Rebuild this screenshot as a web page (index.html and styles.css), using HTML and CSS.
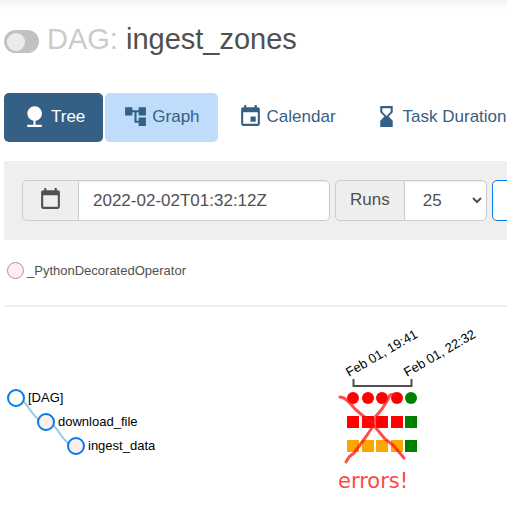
FILE: index.html
```html
<!DOCTYPE html>
<html lang="en">
<head>
<meta charset="utf-8">
<title>ingest_zones - Tree</title>
<meta name="viewport" content="width=device-width, initial-scale=1">
<link rel="stylesheet" href="styles.css">
</head>
<body>
<header class="page-header">
  <label class="toggle"><input type="checkbox" class="toggle-input" aria-label="Pause or unpause DAG"><span class="toggle-track"></span></label>
  <h1 class="title"><span class="title-kind">DAG:</span> ingest_zones</h1>
</header>

<nav class="tabs">
  <a class="tab tab-active" href="#tree">
    <svg class="icon" viewBox="0 0 24 24" aria-hidden="true"><path d="M13 16.12c3.47-.41 6.17-3.36 6.17-6.95 0-3.87-3.13-7-7-7s-7 3.13-7 7c0 3.47 2.52 6.34 5.83 6.89V20H5v2h14v-2h-6v-3.88z"/></svg>Tree</a>
  <a class="tab tab-hover" href="#graph">
    <svg class="icon" viewBox="0 0 24 24" aria-hidden="true"><path d="M22 11V3h-7v3H9V3H2v8h7V8h2v10h4v3h7v-8h-7v3h-2V8h2v3z"/></svg>Graph</a>
  <a class="tab" href="#calendar">
    <svg class="icon" viewBox="0 0 24 24" aria-hidden="true"><path d="M17 12h-5v5h5v-5zM16 1v2H8V1H6v2H5c-1.11 0-1.99.9-1.99 2L3 19c0 1.1.89 2 2 2h14c1.1 0 2-.9 2-2V5c0-1.1-.9-2-2-2h-1V1h-2zm3 18H5V8h14v11z"/></svg>Calendar</a>
  <a class="tab" href="#duration">
    <svg class="icon" viewBox="0 0 24 24" aria-hidden="true"><path d="M18 22l-.01-6L14 12l3.99-4.01L18 2H6v6l4 4-4 3.99V22h12zM8 7.5V4h8v3.5l-4 4-4-4z"/></svg>Task Duration</a>
</nav>

<form class="filters">
  <div class="group">
    <label class="addon" for="base-date" aria-label="Base date">
      <svg class="icon" viewBox="0 0 24 24" aria-hidden="true"><path d="M16 1v2H8V1H6v2H5c-1.11 0-1.99.9-1.99 2L3 19c0 1.1.89 2 2 2h14c1.1 0 2-.9 2-2V5c0-1.1-.9-2-2-2h-1V1h-2zm3 18H5V8h14v11z"/></svg>
    </label>
    <input class="field date" id="base-date" type="text" value="2022-02-02T01:32:12Z">
  </div>
  <div class="group">
    <label class="addon" for="runs">Runs</label>
    <div class="select-wrap">
      <select class="field runs" id="runs"><option>5</option><option selected>25</option><option>50</option></select>
      <svg class="chevron" viewBox="0 0 12 8" aria-hidden="true"><path d="M2 2l4 4 4-4"/></svg>
    </div>
  </div>
  <button class="update" type="submit" aria-label="Update"></button>
</form>

<div class="legend"><span class="legend-dot"></span>_PythonDecoratedOperator</div>

<svg class="tree" role="img" aria-label="Task tree with run states">
  <g class="links">
    <path d="M16 90C28 90 32 114 46 114"/>
    <path d="M46 114C58 114 62 138 76 138"/>
  </g>
  <g class="nodes">
    <circle class="root" cx="16" cy="90" r="8"/>
    <circle cx="46" cy="114" r="8"/>
    <circle cx="76" cy="138" r="8"/>
  </g>
  <g class="labels">
    <text x="28" y="94">[DAG]</text>
    <text x="58" y="118">download_file</text>
    <text x="88" y="142">ingest_data</text>
    <text transform="translate(349 69) rotate(-30)">Feb 01, 19:41</text>
    <text transform="translate(407 69) rotate(-30)">Feb 01, 22:32</text>
  </g>
  <path class="axis" d="M353.500 71V78H411.500V71"/>
  <g class="failed">
    <circle cx="353" cy="90" r="6"/><circle cx="368" cy="90" r="6"/><circle cx="382" cy="90" r="6"/><circle cx="397" cy="90" r="6"/>
    <rect x="347" y="108" width="12" height="12"/><rect x="362" y="108" width="12" height="12"/><rect x="376" y="108" width="12" height="12"/><rect x="391" y="108" width="12" height="12"/>
  </g>
  <g class="upstream-failed">
    <rect x="347" y="132" width="12" height="12"/><rect x="362" y="132" width="12" height="12"/><rect x="376" y="132" width="12" height="12"/><rect x="391" y="132" width="12" height="12"/>
  </g>
  <g class="success">
    <circle cx="411" cy="90" r="6"/><rect x="405" y="108" width="12" height="12"/><rect x="405" y="132" width="12" height="12"/>
  </g>
  <path class="mark" d="M340 89L344 90L349 94L355 101L362 107L371 114L376 120L385 131L393 137L399 144L404 150"/>
  <path class="mark" d="M395 86L390 87L387 93L382 101L376 108L374 117L365 130L354 145L349 149L346 154"/>
  <text class="note" x="338" y="180">errors!</text>
</svg>
</body>
</html>
```

FILE: styles.css
```css
* { box-sizing: border-box; }

body {
  margin: 0;
  padding: 23px 0 0 4px;
  overflow: hidden;
  font-family: "Liberation Sans", Arial, sans-serif;
  font-size: 17px;
  line-height: 24px;
  color: #51504f;
  background: linear-gradient(#f4f4f4, #fff 10px) no-repeat #fff;
}

.page-header {
  display: flex;
  align-items: center;
  gap: 8px;
  height: 32px;
  margin-bottom: 38px;
}

.toggle { display: flex; padding-top: 5px; }

.toggle-input {
  position: absolute;
  opacity: 0;
}

.toggle-track {
  display: flex;
  align-items: center;
  width: 35px;
  height: 23px;
  padding: 0 3px;
  border-radius: 12px;
  background: #c4c2c1;
}

.toggle-track::before {
  content: "";
  width: 18px;
  height: 18px;
  border-radius: 50%;
  background: #edecec;
}

.title {
  margin: 0;
  font-size: 29px;
  font-weight: 400;
  line-height: 32px;
  white-space: nowrap;
}

.title-kind { color: #cbcbcb; }

.icon {
  flex: none;
  width: 25px;
  height: 25px;
  fill: currentColor;
}

.tabs {
  display: flex;
  gap: 2px;
  overflow: hidden;
}

.tab {
  display: flex;
  flex: none;
  align-items: center;
  gap: 4px;
  height: 49px;
  padding: 0 18px 2px;
  border-radius: 5px;
  color: #356086;
  text-decoration: none;
  white-space: nowrap;
}

.tab-active { background: #356086; color: #fff; }

.tab-hover { background: #c0dcfb; }

.filters {
  display: flex;
  gap: 5px;
  margin-top: 19px;
  padding: 19px 18px;
  overflow: hidden;
  background: #efefef;
}

.group { display: flex; flex: none; height: 41px; }

.addon {
  display: flex;
  align-items: center;
  padding: 0 14px 2px;
  border: 1px solid #ccc;
  border-right: 0;
  border-radius: 5px 0 0 5px;
  background: #eee;
}

.date { width: 252px; padding: 0 14px; }

.field {
  height: 41px;
  border: 1px solid #ccc;
  border-radius: 0 5px 5px 0;
  background: #fff;
  box-shadow: inset 0 1px 1px rgba(0, 0, 0, 0.08);
  color: #51504f;
  font: inherit;
}

.select-wrap { position: relative; }

.runs { width: 83px; padding: 0 18px; appearance: none; }

.chevron {
  position: absolute;
  top: 16px;
  right: 4px;
  width: 12px;
  height: 8px;
  fill: none;
  stroke: #51504f;
  stroke-width: 2;
  pointer-events: none;
}

.addon .icon { margin: 0 1px; }

.update {
  flex: none;
  width: 92px;
  height: 41px;
  border: 1px solid #017cee;
  border-radius: 5px;
  background: #fff;
}

.legend {
  display: flex;
  align-items: center;
  gap: 3px;
  height: 67px;
  padding: 0 3px 4px;
  border-bottom: 2px solid #efefef;
  font-size: 13px;
}

.legend-dot {
  width: 17px;
  height: 17px;
  border: 1px solid #999;
  border-radius: 50%;
  background: #ffefeb;
}

.tree {
  display: block;
  width: calc(100% + 4px);
  height: 200px;
  margin: 1px 0 0 -4px;
}

.links { fill: none; stroke: #9ecae1; stroke-width: 2; }

.nodes { fill: #ffefeb; stroke: #017cee; stroke-width: 2; }

.root { fill: #fff; }

.labels { fill: #000; font-size: 13px; }

.axis { fill: none; stroke: #51504f; stroke-width: 2; }

.failed { fill: red; }

.upstream-failed { fill: orange; }

.success { fill: green; }

.mark {
  fill: none;
  stroke: #ff1010;
  stroke-opacity: 0.75;
  stroke-width: 3;
  stroke-linecap: round;
  stroke-linejoin: round;
}

.note {
  fill: #ff4848;
  font-family: "DejaVu Sans", sans-serif;
  font-size: 21px;
}
```
